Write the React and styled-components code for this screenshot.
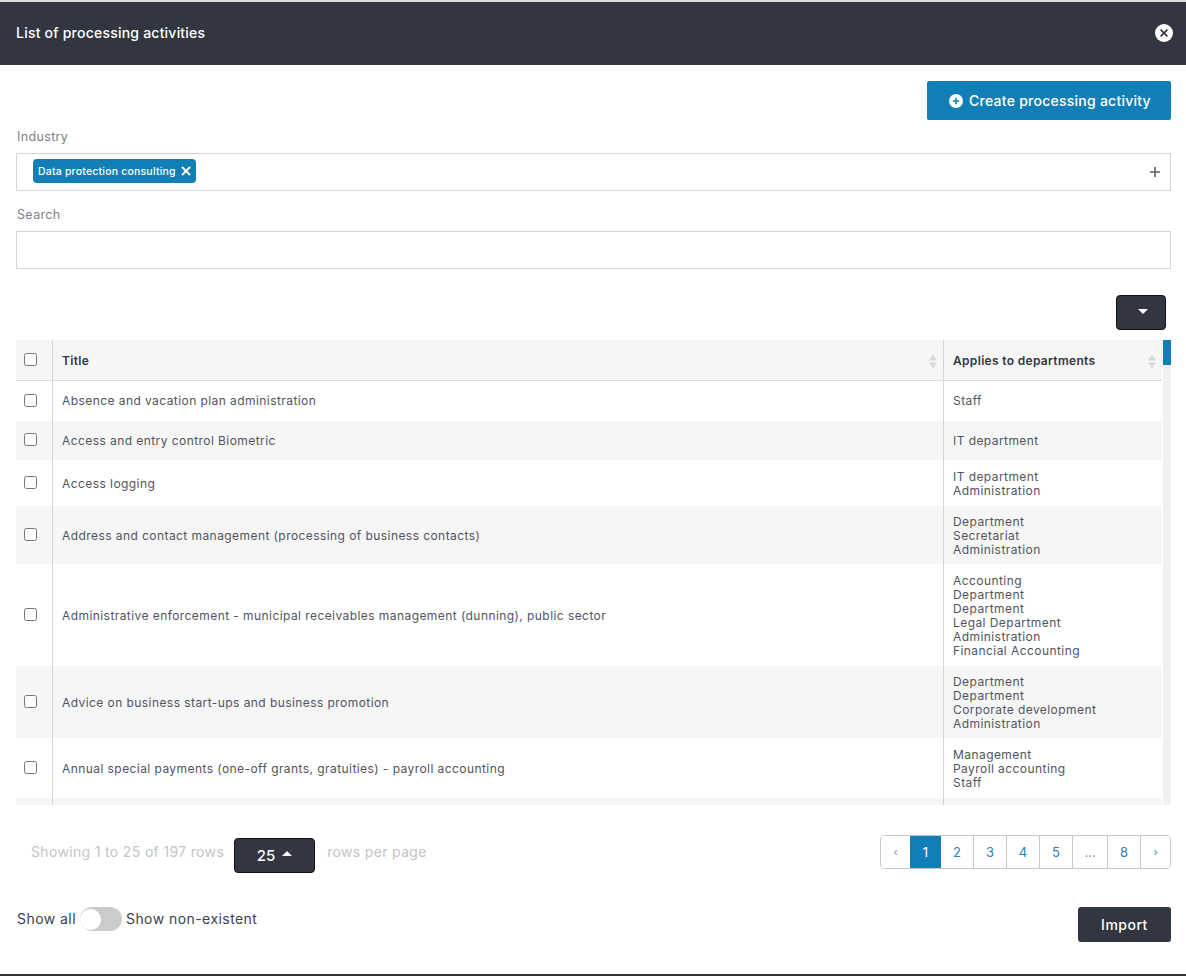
import React from "react";
import styled, { createGlobalStyle } from "styled-components";

const FONT = `Inter, "Noto Sans", "Liberation Sans", sans-serif`;

const Global = createGlobalStyle`
  html, body { margin: 0; padding: 0; background: #fff; }
  body { font-family: ${FONT}; overflow: hidden; }
  * { box-sizing: border-box; }
`;

const Page = styled.div`
  width: 1186px;
  height: 976px;
  display: flex;
  flex-direction: column;
  border-top: 2px solid #dcdcdc;
  border-bottom: 2px solid #333;
`;
const Header = styled.header`
  height: 63px;
  flex: none;
  background: #323641;
  display: flex;
  align-items: center;
  justify-content: space-between;
  padding: 0 13px 2px 16px;
`;
const HeaderTitle = styled.h1`
  margin: 0;
  color: #fff;
  font-size: 14px;
  font-weight: 500;
  letter-spacing: 0.22px;
`;
const Body = styled.main`
  flex: 1;
  display: flex;
  flex-direction: column;
  padding: 16px 15px 0 16px;
`;
const TopActions = styled.div`
  display: flex;
  justify-content: flex-end;
  height: 39px;
`;
const PrimaryButton = styled.button`
  width: 244px;
  height: 39px;
  border: 0;
  border-radius: 2px;
  background: #117fb5;
  color: #fff;
  font: 500 14px ${FONT};
  letter-spacing: 0.25px;
  display: flex;
  align-items: center;
  justify-content: center;
  gap: 6px;
  padding: 0 0 0 2px;
`;
const Label = styled.label`
  display: block;
  height: 17px;
  color: #7d818c;
  font-size: 12.5px;
  line-height: 17px;
  margin: ${(p) => p.$top}px 0 8px;
  padding-left: 1px;
  letter-spacing: 0.35px;
`;
const Field = styled.div`
  height: 38px;
  border: 1px solid #d5d5d5;
  display: flex;
  align-items: center;
  justify-content: space-between;
  padding: 0 10px 0 16px;
`;
const Tag = styled.span`
  height: 24px;
  width: 163px;
  margin-bottom: 2px;
  background: #117fb5;
  color: #fff;
  border-radius: 4px;
  font-size: 10.5px;
  font-weight: 500;
  letter-spacing: 0.2px;
  display: flex;
  align-items: center;
  gap: 5px;
  padding: 0 5px;
  white-space: nowrap;
`;
const DropRow = styled.div`
  display: flex;
  justify-content: flex-end;
  padding-right: 5px;
  margin-top: 26px;
  height: 45px;
`;
const DarkButton = styled.button`
  height: 35px;
  width: ${(p) => p.$w}px;
  border: 1px solid #111;
  border-radius: 4px;
  background: #323641;
  color: #fff;
  font: 500 15px ${FONT};
  display: flex;
  align-items: center;
  justify-content: center;
  gap: 7px;
  padding: 0;
  margin-top: ${(p) => p.$top || 0}px;
`;
const Caret = styled.span`
  width: 0;
  height: 0;
  border-left: 5px solid transparent;
  border-right: 5px solid transparent;
  ${(p) =>
    p.$up
      ? "border-bottom: 5px solid #fff; margin-top: -4px;"
      : "border-top: 5px solid #fff; margin: -3px 0 0 4px;"}
`;
const TableWrap = styled.div`
  height: 465px;
  display: flex;
  overflow: hidden;
`;
const TableCol = styled.div`
  width: 1147px;
  overflow: hidden;
`;
const Track = styled.div`
  width: 8px;
  background: #f1f1f1;
`;
const Thumb = styled.div`
  height: 25px;
  background: #117fb5;
`;
const Row = styled.div`
  display: grid;
  grid-template-columns: 37px 891px 218px;
  width: 1146px;
  height: ${(p) => p.$h}px;
  background: ${(p) => (p.$alt ? "#f6f6f6" : "#fff")};
  ${(p) => p.$head && "border-bottom: 1px solid #dcdcdc;"}
`;
const CheckCell = styled.div`
  border-right: 1px solid #d5d5d5;
  display: flex;
  align-items: center;
  padding: 0 0 2px 8px;
`;
const Check = styled.span`
  width: 13px;
  height: 13px;
  border: 1px solid #767676;
  border-radius: 2.5px;
  background: #fff;
`;
const Cell = styled.div`
  display: flex;
  align-items: center;
  justify-content: space-between;
  padding: ${(p) => (p.$nudge ? 2 : 0)}px 5px 0 9px;
  color: #50545e;
  font-size: 12px;
  line-height: 14px;
  letter-spacing: 0.43px;
  ${(p) => p.$rule && "border-right: 1px solid #d5d5d5;"}
  ${(p) => p.$head && "color: #323641; font-weight: 600; letter-spacing: 0.32px;"}
`;
const Dept = styled.div`
  white-space: pre-line;
`;
const Sort = styled.svg`
  width: 10px;
  height: 15px;
  flex: none;
`;
const Footer = styled.div`
  display: flex;
  justify-content: space-between;
  margin-top: 30px;
  height: 38px;
  padding-left: 15px;
`;
const PagerInfo = styled.div`
  display: flex;
  align-items: flex-start;
  color: #c4c4c4;
  font-size: 14px;
  line-height: 34px;
  letter-spacing: 0.34px;
`;
const InfoText = styled.span`
  margin: 0 ${(p) => p.$right || 0}px 0 ${(p) => p.$left || 0}px;
`;
const Pager = styled.nav`
  display: flex;
  height: 34px;
  border: 1px solid #c8c8c8;
  border-radius: 4px;
  overflow: hidden;
`;
const PageItem = styled.span`
  width: ${(p) => p.$w}px;
  display: flex;
  align-items: center;
  justify-content: center;
  font-size: ${(p) => (p.$small ? 11 : 13)}px;
  color: ${(p) => (p.$active ? "#fff" : p.$muted ? "#8a8f98" : "#2a82b5")};
  background: ${(p) => (p.$active ? "#117fb5" : "#fff")};
  ${(p) => !p.$last && !p.$active && !p.$beforeActive && "border-right: 1px solid #c8c8c8;"}
`;
const BottomRow = styled.div`
  display: flex;
  justify-content: space-between;
  align-items: flex-start;
  margin-top: 34px;
  padding-left: 1px;
`;
const ToggleGroup = styled.div`
  display: flex;
  align-items: center;
  gap: 4px;
  height: 24px;
  color: #3c404b;
  font-size: 14px;
  letter-spacing: 0.44px;
`;
const ToggleText = styled.span`
  margin-top: -2px;
`;
const Toggle = styled.span`
  width: 42px;
  height: 24px;
  border-radius: 12px;
  background: #cbcbcb;
  display: flex;
  align-items: center;
`;
const Knob = styled.span`
  width: 21px;
  height: 21px;
  border-radius: 50%;
  background: #fff;
`;
const ImportButton = styled.button`
  width: 93px;
  height: 35px;
  border: 0;
  border-radius: 3px;
  background: #323641;
  color: #fff;
  font: 500 14px ${FONT};
  letter-spacing: 0.5px;
  padding: 0;
`;

const CloseIcon = () => (
  <svg width="18" height="18" viewBox="0 0 18 18">
    <circle cx="9" cy="9" r="9" fill="#fff" />
    <path d="M5.6 5.6l6.8 6.8M12.4 5.6l-6.8 6.8" stroke="#323641" strokeWidth="1.6" />
  </svg>
);
const PlusCircle = () => (
  <svg width="14" height="14" viewBox="0 0 14 14">
    <circle cx="7" cy="7" r="7" fill="#fff" />
    <path d="M7 3.8v6.4M3.8 7h6.4" stroke="#117fb5" strokeWidth="1.6" />
  </svg>
);
const TagClose = () => (
  <svg width="10" height="10" viewBox="0 0 10 10">
    <path d="M1 1l8 8M9 1l-8 8" stroke="#fff" strokeWidth="1.9" />
  </svg>
);
const PlusIcon = () => (
  <svg width="10" height="10" viewBox="0 0 10 10">
    <path d="M5 0v10M0 5h10" stroke="#5c5c5c" strokeWidth="1.6" />
  </svg>
);
const SortIcon = () => (
  <Sort viewBox="0 0 10 15">
    <path d="M5 0.5L9 6.5H1zM5 14.5L1 8.5H9z" fill="#d8d8d8" />
  </Sort>
);

const rows = [
  ["Absence and vacation plan administration", "Staff", 40],
  ["Access and entry control Biometric", "IT department", 39],
  ["Access logging", "IT department\nAdministration", 46],
  ["Address and contact management (processing of business contacts)", "Department\nSecretariat\nAdministration", 58],
  ["Administrative enforcement - municipal receivables management (dunning), public sector", "Accounting\nDepartment\nDepartment\nLegal Department\nAdministration\nFinancial Accounting", 102],
  ["Advice on business start-ups and business promotion", "Department\nDepartment\nCorporate development\nAdministration", 72],
  ["Annual special payments (one-off grants, gratuities) - payroll accounting", "Management\nPayroll accounting\nStaff", 60],
  ["", "", 40],
];

const pages = [
  { t: "‹", w: 29, muted: true, small: true, beforeActive: true },
  { t: "1", w: 31, active: true },
  { t: "2", w: 33 },
  { t: "3", w: 33 },
  { t: "4", w: 33 },
  { t: "5", w: 33 },
  { t: "...", w: 35, muted: true },
  { t: "8", w: 33 },
  { t: "›", w: 29, small: true, last: true },
];

export default function App() {
  return (
    <Page>
      <Global />
      <Header>
        <HeaderTitle>List of processing activities</HeaderTitle>
        <CloseIcon />
      </Header>
      <Body>
        <TopActions>
          <PrimaryButton>
            <PlusCircle />
            Create processing activity
          </PrimaryButton>
        </TopActions>
        <Label $top={8}>Industry</Label>
        <Field>
          <Tag>
            Data protection consulting <TagClose />
          </Tag>
          <PlusIcon />
        </Field>
        <Label $top={15}>Search</Label>
        <Field />
        <DropRow>
          <DarkButton $w={50}>
            <Caret />
          </DarkButton>
        </DropRow>
        <TableWrap>
          <TableCol>
            <Row $h={41} $alt $head>
              <CheckCell><Check /></CheckCell>
              <Cell $head $rule $nudge>Title<SortIcon /></Cell>
              <Cell $head $nudge>Applies to departments<SortIcon /></Cell>
            </Row>
            {rows.map(([title, dept, h], i) => (
              <Row key={i} $h={h} $alt={i % 2 === 1}>
                <CheckCell>{title && <Check />}</CheckCell>
                <Cell $rule $nudge={h > 40}>{title}</Cell>
                <Cell $nudge={h > 40}><Dept>{dept}</Dept></Cell>
              </Row>
            ))}
          </TableCol>
          <Track><Thumb /></Track>
        </TableWrap>
        <Footer>
          <PagerInfo>
            <InfoText $right={10}>Showing 1 to 25 of 197 rows</InfoText>
            <DarkButton $w={81} $top={3}>
              25 <Caret $up />
            </DarkButton>
            <InfoText $left={12}>rows per page</InfoText>
          </PagerInfo>
          <Pager>
            {pages.map((p) => (
              <PageItem key={p.t} $w={p.w} $active={p.active} $muted={p.muted} $small={p.small} $last={p.last} $beforeActive={p.beforeActive}>
                {p.t}
              </PageItem>
            ))}
          </Pager>
        </Footer>
        <BottomRow>
          <ToggleGroup>
            <ToggleText>Show all</ToggleText>
            <Toggle><Knob /></Toggle>
            <ToggleText>Show non-existent</ToggleText>
          </ToggleGroup>
          <ImportButton>Import</ImportButton>
        </BottomRow>
      </Body>
    </Page>
  );
}
